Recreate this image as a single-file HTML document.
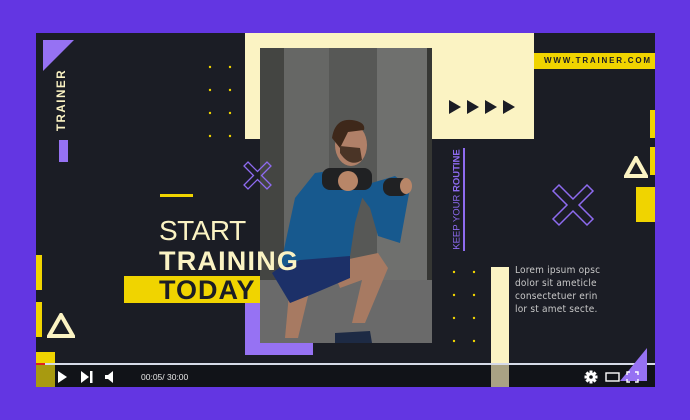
<!DOCTYPE html>
<html><head><meta charset="utf-8"><style>
*{margin:0;padding:0;box-sizing:border-box}
body{width:690px;height:420px;background:#6336e2;position:relative;overflow:hidden;font-family:"Liberation Sans",sans-serif}
.a{position:absolute}
</style></head><body>
<div class="a" style="left:36px;top:33px;width:619px;height:354px;background:#1b1d25"></div>
<div class="a" style="left:245px;top:33px;width:289px;height:106px;background:#fbf3c3"></div>
<div class="a" style="left:245px;top:303px;width:68px;height:52px;background:#9672f3"></div>
<svg class="a" style="left:260px;top:48px" width="172" height="295" viewBox="0 0 172 295">
<rect width="172" height="295" fill="#5e5f5d"/>
<rect x="0" width="24" height="240" fill="#444542"/>
<rect x="24" width="45" height="240" fill="#666765"/>
<rect x="69" width="48" height="240" fill="#575856"/>
<rect x="117" width="50" height="240" fill="#6f706e"/>
<rect x="167" width="5" height="240" fill="#363734"/>
<rect x="0" y="232" width="172" height="63" fill="#6a6a6a"/>
<path d="M30 235 L50 240 L38 290 L25 290 Z" fill="#a77a62"/>
<path d="M70 215 L118 205 L128 220 L105 275 L92 275 L102 232 L80 240 Z" fill="#a77a62"/>
<path d="M75 285 L110 283 L112 295 L75 295 Z" fill="#1d2a44"/>
<path d="M12 225 L40 205 L90 205 L90 230 L55 245 L30 255 Z" fill="#1c3068"/>
<path d="M20 220 L35 150 L55 125 L90 120 L105 140 L95 175 L90 208 L40 212 Z" fill="#17598e"/>
<path d="M95 140 L135 128 L150 140 L140 195 L118 188 L110 160 Z" fill="#17598e"/>
<ellipse cx="91" cy="97" rx="16" ry="21" fill="#b08068"/>
<path d="M72 90 Q75 70 92 72 Q106 74 104 82 L88 84 L80 100 Z" fill="#3e281a"/>
<path d="M80 105 Q90 120 102 112 L100 100 L80 98 Z" fill="#4a3426"/>
<rect x="62" y="120" width="50" height="22" rx="8" fill="#202123"/>
<rect x="123" y="130" width="26" height="18" rx="8" fill="#202123"/>
<ellipse cx="88" cy="133" rx="10" ry="10" fill="#b88668"/>
<ellipse cx="146" cy="138" rx="6" ry="8" fill="#b88668"/>
</svg>
<svg class="a" style="left:43px;top:40px" width="32" height="32"><polygon points="0,0 31,0 0,31" fill="#9672f3"/></svg>
<div class="a" style="left:47px;top:68px;width:30px;height:64px;"><div style="position:absolute;left:-17px;top:25px;width:64px;height:14px;transform:rotate(-90deg);color:#fbf3c3;font-weight:bold;font-size:11.5px;letter-spacing:1.6px;text-align:center;line-height:14px">TRAINER</div></div>
<div class="a" style="left:59px;top:140px;width:9px;height:22px;background:#9672f3"></div>
<svg class="a" style="left:205px;top:62px" width="30" height="80" fill="#f0d400">
<circle cx="5" cy="5" r="1.2"/><circle cx="25" cy="5" r="1.2"/><circle cx="5" cy="28" r="1.2"/><circle cx="25" cy="28" r="1.2"/><circle cx="5" cy="51" r="1.2"/><circle cx="25" cy="51" r="1.2"/><circle cx="5" cy="74" r="1.2"/><circle cx="25" cy="74" r="1.2"/></svg>
<svg class="a" style="left:243px;top:161px" width="29" height="29" viewBox="0 0 29 29"><path d="M5 1 L14.5 10.5 L24 1 L28 5 L18.5 14.5 L28 24 L24 28 L14.5 18.5 L5 28 L1 24 L10.5 14.5 L1 5 Z" fill="none" stroke="#8e6bf0" stroke-width="1.3"/></svg>
<div class="a" style="left:160px;top:194px;width:33px;height:3px;background:#f0d400"></div>
<div class="a" style="left:124px;top:276px;width:136px;height:27px;background:#f0d400"></div>
<div class="a" style="left:159px;top:215px;color:#fbf3c3;font-size:28px;line-height:32px;letter-spacing:-0.5px">START</div>
<div class="a" style="left:159px;top:245px;color:#fbf3c3;font-size:27px;font-weight:900;line-height:32px;letter-spacing:1.2px">TRAINING</div>
<div class="a" style="left:159px;top:274px;color:#1b1d25;font-size:27px;font-weight:900;line-height:32px;letter-spacing:1px">TODAY</div>
<div class="a" style="left:36px;top:255px;width:6px;height:35px;background:#f0d400"></div>
<div class="a" style="left:36px;top:302px;width:6px;height:35px;background:#f0d400"></div>
<svg class="a" style="left:47px;top:313px" width="28" height="25"><polygon points="14,2 26,23 2,23" fill="none" stroke="#fbf3c3" stroke-width="4"/></svg>
<div class="a" style="left:36px;top:352px;width:19px;height:13px;background:#f0d400"></div>
<div class="a" style="left:36px;top:365px;width:19px;height:22px;background:#a89a10"></div>
<svg class="a" style="left:449px;top:100px" width="68" height="14" fill="#1b1d25"><polygon points="0,0 12,7 0,14"/><polygon points="18,0 30,7 18,14"/><polygon points="36,0 48,7 36,14"/><polygon points="54,0 66,7 54,14"/></svg>
<div class="a" style="left:534px;top:53px;width:121px;height:16px;background:#f0d400;color:#1b1d25;font-size:8px;font-weight:bold;letter-spacing:1.8px;line-height:16px;padding-left:10px">WWW.TRAINER.COM</div>
<div class="a" style="left:463px;top:148px;width:1.5px;height:103px;background:#8e6bf0"></div>
<div class="a" style="left:406px;top:193px;width:102px;height:13px;transform:rotate(-90deg);color:#8e6bf0;font-size:9.5px;line-height:13px;letter-spacing:0;white-space:nowrap;text-align:center">KEEP YOUR <b>ROUTINE</b></div>
<svg class="a" style="left:449px;top:267px" width="30" height="80" fill="#f0d400">
<circle cx="5" cy="5" r="1.2"/><circle cx="25" cy="5" r="1.2"/><circle cx="5" cy="28" r="1.2"/><circle cx="25" cy="28" r="1.2"/><circle cx="5" cy="51" r="1.2"/><circle cx="25" cy="51" r="1.2"/><circle cx="5" cy="74" r="1.2"/><circle cx="25" cy="74" r="1.2"/></svg>
<div class="a" style="left:491px;top:267px;width:18px;height:98px;background:#fbf3c3"></div>
<div class="a" style="left:491px;top:365px;width:18px;height:22px;background:#a9a284"></div>
<div class="a" style="left:515px;top:264px;color:#c9c9c9;font-family:'DejaVu Sans Condensed','Liberation Sans',sans-serif;font-size:10px;line-height:13px;letter-spacing:0.2px">Lorem ipsum opsc<br>dolor sit ameticle<br>consectetuer erin<br>lor st amet secte.</div>
<svg class="a" style="left:551px;top:183px" width="44" height="44" viewBox="0 0 44 44"><path d="M8 2 L22 16 L36 2 L42 8 L28 22 L42 36 L36 42 L22 28 L8 42 L2 36 L16 22 L2 8 Z" fill="none" stroke="#8e6bf0" stroke-width="1.5"/></svg>
<svg class="a" style="left:624px;top:156px" width="24" height="22"><polygon points="12,2 22,20 2,20" fill="none" stroke="#fbf3c3" stroke-width="4"/></svg>
<div class="a" style="left:650px;top:110px;width:5px;height:28px;background:#f0d400"></div>
<div class="a" style="left:650px;top:147px;width:5px;height:28px;background:#f0d400"></div>
<div class="a" style="left:636px;top:187px;width:19px;height:35px;background:#f0d400"></div>
<div class="a" style="left:36px;top:363px;width:619px;height:2px;background:#d6dbe8"></div>
<div class="a" style="left:36px;top:363px;width:9px;height:2px;background:#e02020"></div>
<div class="a" style="left:55px;top:365px;width:436px;height:22px;background:#111318"></div>
<div class="a" style="left:509px;top:365px;width:146px;height:22px;background:#111318"></div>
<svg class="a" style="left:620px;top:348px" width="28" height="34"><polygon points="27,0 27,33 0,33" fill="#9672f3"/></svg>
<svg class="a" style="left:55px;top:370px" width="70" height="14" fill="#fff">
<polygon points="3,1 12,7 3,13"/>
<polygon points="26,1 34,7 26,13"/><rect x="35" y="1" width="2.5" height="12"/>
<polygon points="50,5 53,5 58,1 58,13 53,9 50,9"/></svg>
<div class="a" style="left:141px;top:371px;color:#e6e6e6;font-size:8.5px;line-height:12px">00:05/ 30:00</div>
<svg class="a" style="left:584px;top:370px" width="60" height="14">
<g fill="#fff"><circle cx="7" cy="7" r="4.5"/><rect x="5.5" y="0.5" width="3" height="13"/><rect x="0.5" y="5.5" width="13" height="3"/><rect x="5.5" y="0.5" width="3" height="13" transform="rotate(45 7 7)"/><rect x="5.5" y="0.5" width="3" height="13" transform="rotate(-45 7 7)"/></g>
<circle cx="7" cy="7" r="1.8" fill="#111318"/>
<rect x="22" y="3" width="13" height="8" fill="none" stroke="#fff" stroke-width="1.4"/>
<path d="M43 5 V2 H46 M51 2 H54 V5 M54 9 V12 H51 M46 12 H43 V9" fill="none" stroke="#fff" stroke-width="1.4"/>
</svg>
</body></html>
